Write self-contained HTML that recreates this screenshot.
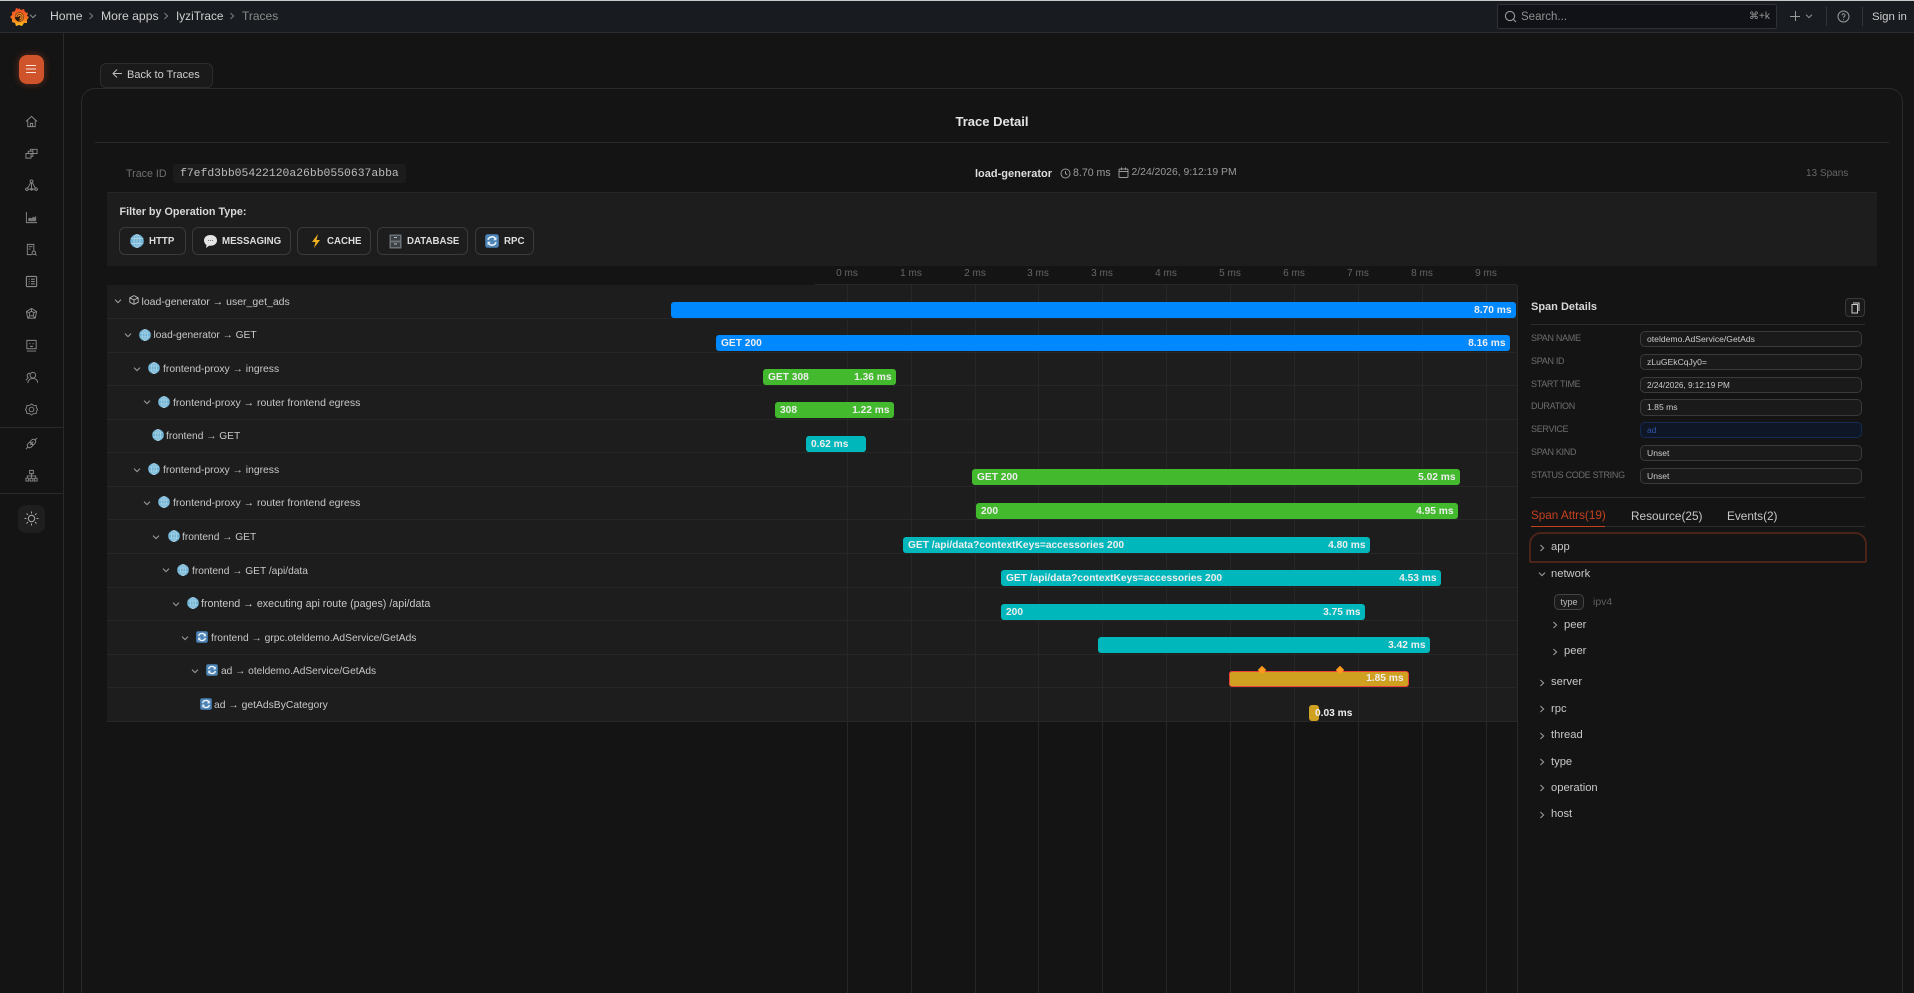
<!DOCTYPE html>
<html><head><meta charset="utf-8"><title>Trace Detail</title>
<style>
html,body{margin:0;padding:0;background:#141414;width:1914px;height:993px;overflow:hidden}
body{position:relative;font-family:"Liberation Sans",sans-serif;color:#ccc}
.a{position:absolute}
.t{position:absolute;white-space:nowrap;line-height:14px;height:14px;margin-top:-7px;font-size:11px;color:#c8c8c8}
.r{position:absolute;left:107px;width:1410px;background:#1d1d1d;border-bottom:1px solid #272727;box-sizing:border-box}
.g{position:absolute;top:285px;bottom:0;width:1px;background:#272727}
.b{position:absolute;height:16px;border-radius:3px;color:#eee;font-size:10.2px;font-weight:700;line-height:18px;box-sizing:border-box;padding:0 4.5px 0 5px;display:flex;justify-content:space-between;white-space:nowrap}
.bl{background:#0088ff}.gr{background:#43b92d}.te{background:#00b8bb}
.x{position:absolute;white-space:nowrap;font-size:10px;color:#666;line-height:12px;margin-top:-6px;width:40px;margin-left:-20px;text-align:center}
.fb{position:absolute;top:227px;height:28px;box-sizing:border-box;border:1px solid #3a3a3a;border-radius:6px;font-size:9.7px;font-weight:700;color:#ddd;line-height:27px}
.fb span{position:absolute;white-space:nowrap}
.fb svg{position:absolute;top:6px}
.l{position:absolute;left:1531px;font-size:9px;letter-spacing:-.3px;color:#6e6e6e;line-height:12px;margin-top:-6px;white-space:nowrap}
.i{position:absolute;left:1640px;width:222px;height:16px;box-sizing:border-box;border:1px solid #3a3a3a;border-radius:5px;background:#1a1a1a;font-size:8.6px;line-height:15px;padding-left:6px;color:#ccc;white-space:nowrap}
.ic{position:absolute;left:25px;width:13px;height:13px;stroke:#8a8a8a;fill:none;stroke-width:1}
.ch{position:absolute;width:8px;height:8px;stroke:#9a9a9a;fill:none;stroke-width:1.1}
.tr{font-size:11.2px}
</style></head><body>
<svg width="0" height="0" style="position:absolute">
<defs>
<linearGradient id="fl" x1="0" y1="0" x2="0" y2="1"><stop offset="0" stop-color="#ea4a24"/><stop offset=".6" stop-color="#f5761f"/><stop offset="1" stop-color="#fbc21f"/></linearGradient>
<symbol id="globe" viewBox="0 0 12 12"><circle cx="6" cy="6" r="5.8" fill="#6fb4d8"/><g stroke="#c5dfe8" stroke-width=".55" fill="none"><ellipse cx="6" cy="6" rx="2.6" ry="5.6"/><path d="M6 .4V11.6M.6 4H11.4M.6 8H11.4"/></g></symbol>
<symbol id="rpc" viewBox="0 0 12 12"><rect x=".2" y=".2" width="11.6" height="11.6" rx="2" fill="#4c84b8"/><g stroke="#eaf2f8" stroke-width="1.4" fill="none"><path d="M2.6 5A3.5 3.5 0 0 1 9 4.2"/><path d="M9.4 7A3.5 3.5 0 0 1 3 7.8"/></g><path d="M9.8 2.4V5.4H7Z M2.2 9.6V6.6H5Z" fill="#eaf2f8"/></symbol>
<symbol id="dn" viewBox="0 0 8 8"><path d="M1 2.6 4 5.6 7 2.6"/></symbol>
<symbol id="rt" viewBox="0 0 8 8"><path d="M2.4 1 5.6 4 2.4 7"/></symbol>
</defs></svg>

<!-- top bar -->
<div class="a" style="left:0;top:0;width:1914px;height:1px;background:#c9c9c9"></div>
<div class="a" style="left:0;top:1px;width:1914px;height:31px;background:#181b1f;border-bottom:1px solid #2a2d31"></div>
<svg class="a" style="left:9px;top:7px" width="20" height="20" viewBox="0 0 20 20"><path d="M10 1l2 2 3-1 1 3 3 1-1 3 2 1-2 3 0 3-3 0-2 3-3-1-3 1-1-3-3-1 0-3-2-2 2-2 0-3 3-1 1-3 3 1z" fill="url(#fl)"/><circle cx="10.500" cy="10" r="4.600" fill="#2a1a14"/><path d="M7 10a3.500 3.500 0 1 1 3.500 3.500M9 10a1.600 1.600 0 1 1 1.600 1.600" fill="none" stroke="#f58a20" stroke-width="1.300"/></svg>
<svg class="ch" style="left:29px;top:12px;stroke:#8a8a8a"><use href="#dn"/></svg>
<div class="t" style="left:50px;top:16px;font-size:12.2px;color:#cfcfcf">Home</div>
<svg class="ch" style="left:87px;top:12px;stroke:#7a7a7a"><use href="#rt"/></svg>
<div class="t" style="left:101px;top:16px;font-size:12.2px;color:#cfcfcf">More apps</div>
<svg class="ch" style="left:162px;top:12px;stroke:#7a7a7a"><use href="#rt"/></svg>
<div class="t" style="left:176px;top:16px;font-size:11.8px;color:#cfcfcf">IyziTrace</div>
<svg class="ch" style="left:228px;top:12px;stroke:#7a7a7a"><use href="#rt"/></svg>
<div class="t" style="left:242px;top:16px;font-size:12px;color:#8a8a8a">Traces</div>

<div class="a" style="left:1497px;top:4px;width:280px;height:25px;box-sizing:border-box;background:#111217;border:1px solid #2e3036;border-radius:2px"></div>
<svg class="a" style="left:1504px;top:10px" width="13" height="13" fill="none" stroke="#9a9a9a" stroke-width="1.1"><circle cx="6" cy="6" r="4.600"/><path d="M9.400 9.400 12 12"/></svg>
<div class="t" style="left:1521px;top:17px;font-size:11.5px;color:#8f8f8f">Search...</div>
<div class="t" style="left:1749px;top:17px;font-size:10px;color:#9a9a9a">⌘+k</div>
<div class="a" style="left:1790px;top:15.5px;width:10px;height:1px;background:#9a9a9a"></div>
<div class="a" style="left:1795px;top:11px;width:1px;height:10px;background:#9a9a9a"></div>
<svg class="ch" style="left:1805px;top:12px;stroke:#8a8a8a"><use href="#dn"/></svg>
<div class="a" style="left:1826px;top:7px;width:1px;height:19px;background:#33363a"></div>
<svg class="a" style="left:1837px;top:10px" width="13" height="13" fill="none" stroke="#9a9a9a" stroke-width="1"><circle cx="6.500" cy="6.500" r="5.500"/><path d="M5 5.200a1.500 1.500 0 1 1 2.300 1.300c-.6.3-.8.6-.8 1.200M6.500 9.200v.8"/></svg>
<div class="a" style="left:1862px;top:7px;width:1px;height:19px;background:#33363a"></div>
<div class="t" style="left:1872px;top:17px;font-size:11.4px;color:#cfcfcf">Sign in</div>

<!-- sidebar -->
<div class="a" style="left:63px;top:33px;width:1px;height:960px;background:#2a2a2a"></div>
<div class="a" style="left:0;top:427px;width:63px;height:1px;background:#2a2a2a"></div>
<div class="a" style="left:0;top:493px;width:63px;height:1px;background:#2a2a2a"></div>
<div class="a" style="left:19px;top:55px;width:25px;height:29px;border-radius:8px;background:#cf532b;box-shadow:0 0 8px rgba(207,83,43,.45)"></div>
<svg class="a" style="left:26px;top:64px" width="11" height="10" stroke="#fbe6dc" stroke-width="1"><path d="M0 1.500H10M0 5H10M0 8.500H10"/></svg>
<svg class="ic" style="top:115px" viewBox="0 0 14 14"><path d="M1 7 7 1.500 13 7M3 6v6.500h8V6M5.800 12.500V9h2.400v3.500"/></svg>
<svg class="ic" style="top:147px" viewBox="0 0 14 14"><path d="M1 7h5.500v5H1zM3.500 7V4.500h5M6 4.500V2.500h7v4.500H8M8.500 2.500v4.500M6.500 7h2v3H6.500"/></svg>
<svg class="ic" style="top:179px" viewBox="0 0 14 14"><circle cx="7" cy="2.500" r="1.500"/><circle cx="2" cy="11" r="1.300"/><circle cx="12" cy="11" r="1.300"/><circle cx="7" cy="11" r="1"/><path d="M6 4 2.800 10M8 4l3.200 6M3.300 11H11M7 4v6"/></svg>
<svg class="ic" style="top:211px" viewBox="0 0 14 14"><path d="M1.500 1v11.500H13"/><path d="M3.500 11V8l2-1 1.500 1 2-2 1.500 1 1.500-2v6z" fill="#777" stroke="none"/></svg>
<svg class="ic" style="top:243px" viewBox="0 0 14 14"><path d="M9.500 8V1.500h-7v11h5M4 4h4M4 6.500h2"/><circle cx="9.500" cy="10.500" r="1.900"/><path d="M11 12l1.500 1.300"/></svg>
<svg class="ic" style="top:275px;stroke-width:1.200" viewBox="0 0 14 14"><rect x="1.500" y="1.500" width="11" height="11" rx="1"/><path d="M4 4.500h1M6.500 4.500h4M4 7h1M6.500 7h4M4 9.500h1M6.500 9.500h4"/></svg>
<svg class="ic" style="top:307px" viewBox="0 0 14 14"><path d="M7 1.500 12.500 5 11 12H3L1.500 5zM7 4.500 9.500 6 8.800 9.500H5.200L4.500 6zM7 1.500v3M1.500 5l3 1M12.500 5l-3 1M3 12l2.200-2.500M11 12 8.800 9.500"/></svg>
<svg class="ic" style="top:339px" viewBox="0 0 14 14"><path d="M2 1.500h10v9H2zM2 13h10"/><path d="M4.800 5h1M8.200 5h1M5.500 8h3" stroke-width="1.300"/></svg>
<svg class="ic" style="top:371px" viewBox="0 0 14 14"><circle cx="8.500" cy="4.500" r="3"/><path d="M3 13c.5-3 2.500-5 5.500-5s5 2 5.500 5M5.500 2.500A2.500 2.500 0 0 0 3.500 7L1 10"/></svg>
<svg class="ic" style="top:403px" viewBox="0 0 14 14"><path d="M7 1 9 2.500 12 2.800 12.500 5.500 13.500 7 12.500 8.800 12 11.200 9 11.500 7 13 5 11.500 2 11.200 1.500 8.800 .5 7 1.500 5.500 2 2.800 5 2.500z"/><circle cx="7" cy="7" r="2.500"/></svg>
<svg class="ic" style="top:437px" viewBox="0 0 14 14"><path d="M1 13 3.500 10.500M13 1 10.500 3.500M5 5.500 8.500 9l-2 2a2.500 2.500 0 0 1-3.500-3.500zM9 5 5.500 8.500 M5.500 5 7.500 3a2.500 2.500 0 0 1 3.500 3.500L9 8.500z"/></svg>
<svg class="ic" style="top:469px" viewBox="0 0 14 14"><path d="M5 1.500h4v3.500H5zM1 10h3v3H1zM5.500 10h3v3h-3zM10 10h3v3h-3zM7 5v5M2.500 10V7.500h9V10"/></svg>
<div class="a" style="left:18px;top:505px;width:27px;height:28px;border-radius:8px;background:#1f1f1f"></div>
<svg class="a" style="left:24px;top:511px" width="15" height="15" viewBox="0 0 15 15" fill="none" stroke="#aaa" stroke-width="1"><circle cx="7.500" cy="7.500" r="3.200"/><path d="M7.500.5v2M7.500 12.500v2M.5 7.500h2M12.500 7.500h2M2.500 2.500l1.400 1.400M11.100 11.100l1.400 1.400M2.500 12.500l1.400-1.400M11.100 3.900l1.400-1.400"/></svg>

<!-- back + card -->
<div class="a" style="left:81px;top:88px;width:1822px;height:920px;box-sizing:border-box;border:1px solid #2a2a2a;border-radius:14px"></div>
<div class="a" style="left:100px;top:63px;width:113px;height:25px;box-sizing:border-box;background:#1a1a1a;border:1px solid #2c2c2c;border-radius:6px"></div>
<svg class="a" style="left:112px;top:68px" width="11" height="11" fill="none" stroke="#bdbdbd" stroke-width="1"><path d="M10 5.500H1M5 1.500 1 5.500 5 9.500"/></svg>
<div class="t" style="left:127px;top:75px;font-size:11px;color:#cfcfcf">Back to Traces</div>
<div class="t" style="left:892px;top:122px;width:200px;text-align:center;font-size:13px;font-weight:700;color:#e4e4e4">Trace Detail</div>
<div class="a" style="left:95px;top:142px;width:1794px;height:1px;background:#2a2a2a"></div>

<div class="t" style="left:126px;top:174px;color:#707070;font-size:10.7px">Trace ID</div>
<div class="a" style="left:173px;top:164px;width:233px;height:19px;border-radius:3px;background:#1c1c1c"></div>
<div class="t" style="left:180px;top:174px;font-family:'Liberation Mono',monospace;font-size:11.4px;color:#bdbdbd">f7efd3bb05422120a26bb0550637abba</div>
<div class="t" style="left:975px;top:174px;font-weight:700;font-size:11px;color:#dedede">load-generator</div>
<svg class="a" style="left:1060px;top:168px" width="11" height="11" fill="none" stroke="#999" stroke-width="1"><circle cx="5.500" cy="5.500" r="4.500"/><path d="M5.500 3v2.700l1.800 1"/></svg>
<div class="t" style="left:1073px;top:173px;color:#9a9a9a;font-size:10.6px">8.70 ms</div>
<svg class="a" style="left:1118px;top:167px" width="11" height="11" fill="none" stroke="#999" stroke-width="1"><rect x="1" y="2" width="9" height="8.500" rx="1"/><path d="M1 4.500h9M3.500.5v2.500M7.500.5v2.500"/></svg>
<div class="t" style="left:1131.500px;top:173px;color:#9a9a9a;font-size:10.4px">2/24/2026, 9:12:19 PM</div>
<div class="t" style="left:1806px;top:174px;color:#666;font-size:10px">13 Spans</div>

<!-- filter -->
<div class="a" style="left:107px;top:192px;width:1770px;height:74px;box-sizing:border-box;background:#1d1d1d;border-top:1px solid #272727"></div>
<div class="t" style="left:119.500px;top:212px;font-weight:700;font-size:10.8px;color:#d8d8d8">Filter by Operation Type:</div>
<div class="fb" style="left:119px;width:67px"><svg style="left:10px;width:14px;height:14px"><use href="#globe" width="14" height="14"/></svg><span style="left:29px">HTTP</span></div>
<div class="fb" style="left:192px;width:99px"><svg style="left:10px;width:15px;height:15px" viewBox="0 0 15 15"><path d="M7.500 1c3.800 0 6.500 2.300 6.500 5.400s-2.700 5.400-6.500 5.400H6L3 14l.5-3C1.900 10 1 8.300 1 6.400 1 3.300 3.700 1 7.500 1z" fill="#e4e4e4"/><path d="M5 6.500h1M7 6.500h1M9 6.500h1" stroke="#777"/></svg><span style="left:29px">MESSAGING</span></div>
<div class="fb" style="left:297px;width:74px"><svg style="left:11px;width:14px;height:14px" viewBox="0 0 14 14"><path d="M9 0 3 8h3.500L5 14l6-8H7.500z" fill="#f0b020"/></svg><span style="left:29px">CACHE</span></div>
<div class="fb" style="left:377px;width:91px"><svg style="left:11px;width:13px;height:15px" viewBox="0 0 13 15"><rect x=".5" y=".5" width="12" height="14" fill="#6b7378"/><rect x="2" y="2" width="9" height="4.500" fill="#3b4044"/><rect x="2" y="8.500" width="9" height="4.500" fill="#3b4044"/><path d="M5 3.500h3M5 10h3" stroke="#bbb"/></svg><span style="left:29px">DATABASE</span></div>
<div class="fb" style="left:475px;width:59px"><svg style="left:9px;width:14px;height:14px"><use href="#rpc" width="14" height="14"/></svg><span style="left:28px">RPC</span></div>

<!-- rows -->
<div class="r" style="top:285px;height:34px"></div><div class="r" style="top:319px;height:34px"></div><div class="r" style="top:353px;height:33px"></div><div class="r" style="top:386px;height:34px"></div><div class="r" style="top:420px;height:33px"></div><div class="r" style="top:453px;height:34px"></div><div class="r" style="top:487px;height:33px"></div><div class="r" style="top:520px;height:34px"></div><div class="r" style="top:554px;height:34px"></div><div class="r" style="top:588px;height:33px"></div><div class="r" style="top:621px;height:34px"></div><div class="r" style="top:655px;height:33px"></div><div class="r" style="top:688px;height:34px"></div>
<!-- axis -->
<div class="a" style="left:815px;top:266px;width:702px;height:19px;background:#141414;border-bottom:1px solid #272727;box-sizing:border-box"></div>
<div class="g" style="left:847px"></div><div class="g" style="left:911px"></div><div class="g" style="left:975px"></div><div class="g" style="left:1038px"></div><div class="g" style="left:1102px"></div><div class="g" style="left:1166px"></div><div class="g" style="left:1230px"></div><div class="g" style="left:1294px"></div><div class="g" style="left:1358px"></div><div class="g" style="left:1422px"></div><div class="g" style="left:1486px"></div>
<div class="a" style="left:1517px;top:285px;width:1px;bottom:0;background:#2a2a2a"></div>
<div class="x" style="left:847px;top:274px">0 ms</div><div class="x" style="left:911px;top:274px">1 ms</div><div class="x" style="left:975px;top:274px">2 ms</div><div class="x" style="left:1038px;top:274px">3 ms</div><div class="x" style="left:1102px;top:274px">3 ms</div><div class="x" style="left:1166px;top:274px">4 ms</div><div class="x" style="left:1230px;top:274px">5 ms</div><div class="x" style="left:1294px;top:274px">6 ms</div><div class="x" style="left:1358px;top:274px">7 ms</div><div class="x" style="left:1422px;top:274px">8 ms</div><div class="x" style="left:1486px;top:274px">9 ms</div>

<!-- row labels -->
<svg class="ch" style="left:114px;top:297px"><use href="#dn"/></svg>
<svg class="a" style="left:129px;top:295px" width="10" height="10" viewBox="0 0 10 10" fill="none" stroke="#bbb" stroke-width=".9"><path d="M5 .6 9.200 2.800V7.200L5 9.400 .8 7.200V2.800zM.8 2.800 5 5l4.200-2.200M5 5v4.400"/></svg>
<div class="t" style="left:141.500px;top:302px;font-size:10.5px">load-generator → user_get_ads</div>

<svg class="ch" style="left:124px;top:331px"><use href="#dn"/></svg>
<svg class="a" style="left:139px;top:329px" width="12" height="12"><use href="#globe" width="12" height="12"/></svg>
<div class="t" style="left:153.500px;top:336px;font-size:10.2px">load-generator → GET</div>

<svg class="ch" style="left:133px;top:365px"><use href="#dn"/></svg>
<svg class="a" style="left:148px;top:362px" width="12" height="12"><use href="#globe" width="12" height="12"/></svg>
<div class="t" style="left:163px;top:370px;font-size:10.35px">frontend-proxy → ingress</div>

<svg class="ch" style="left:143px;top:398px"><use href="#dn"/></svg>
<svg class="a" style="left:158px;top:396px" width="12" height="12"><use href="#globe" width="12" height="12"/></svg>
<div class="t" style="left:173px;top:403px;font-size:10.5px">frontend-proxy → router frontend egress</div>

<svg class="a" style="left:152px;top:429px" width="12" height="12"><use href="#globe" width="12" height="12"/></svg>
<div class="t" style="left:166px;top:437px;font-size:10.2px">frontend → GET</div>

<svg class="ch" style="left:133px;top:466px"><use href="#dn"/></svg>
<svg class="a" style="left:148px;top:463px" width="12" height="12"><use href="#globe" width="12" height="12"/></svg>
<div class="t" style="left:163px;top:471px;font-size:10.35px">frontend-proxy → ingress</div>

<svg class="ch" style="left:143px;top:499px"><use href="#dn"/></svg>
<svg class="a" style="left:158px;top:496px" width="12" height="12"><use href="#globe" width="12" height="12"/></svg>
<div class="t" style="left:173px;top:503px;font-size:10.5px">frontend-proxy → router frontend egress</div>

<svg class="ch" style="left:152px;top:533px"><use href="#dn"/></svg>
<svg class="a" style="left:168px;top:530px" width="12" height="12"><use href="#globe" width="12" height="12"/></svg>
<div class="t" style="left:182px;top:538px;font-size:10.2px">frontend → GET</div>

<svg class="ch" style="left:162px;top:566px"><use href="#dn"/></svg>
<svg class="a" style="left:177px;top:564px" width="12" height="12"><use href="#globe" width="12" height="12"/></svg>
<div class="t" style="left:192px;top:572px;font-size:10.2px">frontend → GET /api/data</div>

<svg class="ch" style="left:172px;top:600px"><use href="#dn"/></svg>
<svg class="a" style="left:187px;top:597px" width="12" height="12"><use href="#globe" width="12" height="12"/></svg>
<div class="t" style="left:201px;top:604px;font-size:10.7px">frontend → executing api route (pages) /api/data</div>

<svg class="ch" style="left:181px;top:634px"><use href="#dn"/></svg>
<svg class="a" style="left:196px;top:631px" width="12" height="12"><use href="#rpc" width="12" height="12"/></svg>
<div class="t" style="left:211px;top:639px;font-size:10.27px">frontend → grpc.oteldemo.AdService/GetAds</div>

<svg class="ch" style="left:191px;top:667px"><use href="#dn"/></svg>
<svg class="a" style="left:206px;top:664px" width="12" height="12"><use href="#rpc" width="12" height="12"/></svg>
<div class="t" style="left:221px;top:672px;font-size:10.2px">ad → oteldemo.AdService/GetAds</div>

<svg class="a" style="left:200px;top:698px" width="12" height="12"><use href="#rpc" width="12" height="12"/></svg>
<div class="t" style="left:214px;top:706px;font-size:10.35px">ad → getAdsByCategory</div>

<!-- bars -->
<div class="b bl" style="left:671px;top:302px;width:845px;justify-content:flex-end">8.70 ms</div>
<div class="b bl" style="left:716px;top:335px;width:794px"><span>GET 200</span><span>8.16 ms</span></div>
<div class="b gr" style="left:763px;top:369px;width:133px"><span>GET 308</span><span>1.36 ms</span></div>
<div class="b gr" style="left:775px;top:402px;width:119px"><span>308</span><span>1.22 ms</span></div>
<div class="b te" style="left:806px;top:436px;width:60px"><span>0.62 ms</span></div>
<div class="b gr" style="left:972px;top:469px;width:488px"><span>GET 200</span><span>5.02 ms</span></div>
<div class="b gr" style="left:976px;top:503px;width:482px"><span>200</span><span>4.95 ms</span></div>
<div class="b te" style="left:903px;top:537px;width:467px"><span>GET /api/data?contextKeys=accessories 200</span><span>4.80 ms</span></div>
<div class="b te" style="left:1001px;top:570px;width:440px"><span>GET /api/data?contextKeys=accessories 200</span><span>4.53 ms</span></div>
<div class="b te" style="left:1001px;top:604px;width:364px"><span>200</span><span>3.75 ms</span></div>
<div class="b te" style="left:1098px;top:637px;width:332px;justify-content:flex-end">3.42 ms</div>
<div class="b" style="left:1229px;top:671px;width:180px;background:#d0a020;border:1px solid #f0403a;line-height:14px;justify-content:flex-end">1.85 ms</div>
<div class="a" style="left:1259px;top:667px;width:6px;height:6px;background:#ff9a1f;transform:rotate(45deg)"></div>
<div class="a" style="left:1337px;top:667px;width:6px;height:6px;background:#ff9a1f;transform:rotate(45deg)"></div>
<div class="a" style="left:1309px;top:705px;width:10px;height:16px;background:#d0a020;border-radius:3px"></div>
<div class="t" style="left:1315px;top:714px;font-weight:700;font-size:10.2px;color:#eee">0.03 ms</div>

<!-- details panel -->
<div class="t" style="left:1531px;top:307px;font-weight:700;font-size:11px;color:#d8d8d8">Span Details</div>
<div class="a" style="left:1845px;top:298px;width:20px;height:19px;box-sizing:border-box;border:1px solid #3a3a3a;border-radius:4px;background:#1a1a1a"></div>
<svg class="a" style="left:1850px;top:302px" width="10" height="12" fill="none" stroke="#ccc" stroke-width="1"><path d="M2 2.500h5.500v8.500H2zM3 1h6v8"/></svg>
<div class="a" style="left:1531px;top:324px;width:334px;height:1px;background:#2d2d2d"></div>
<div class="l" style="top:338px">SPAN NAME</div><div class="i" style="top:331px">oteldemo.AdService/GetAds</div>
<div class="l" style="top:361px">SPAN ID</div><div class="i" style="top:354px">zLuGEkCqJy0=</div>
<div class="l" style="top:384px">START TIME</div><div class="i" style="top:377px;font-size:8.2px">2/24/2026, 9:12:19 PM</div>
<div class="l" style="top:406px">DURATION</div><div class="i" style="top:399px;height:17px">1.85 ms</div>
<div class="l" style="top:429px">SERVICE</div><div class="i" style="top:422px;background:#0f1626;border-color:#152a55;color:#2f55a8">ad</div>
<div class="l" style="top:452px">SPAN KIND</div><div class="i" style="top:445px">Unset</div>
<div class="l" style="top:475px">STATUS CODE STRING</div><div class="i" style="top:468px">Unset</div>
<div class="a" style="left:1531px;top:497px;width:334px;height:1px;background:#2d2d2d"></div>
<div class="t" style="left:1531px;top:516px;font-size:11.7px;color:#c5401f">Span Attrs(19)</div>
<div class="t" style="left:1631px;top:516px;font-size:11.8px;color:#c8c8c8">Resource(25)</div>
<div class="t" style="left:1727px;top:516px;font-size:11.8px;color:#c8c8c8">Events(2)</div>
<div class="a" style="left:1531px;top:526px;width:334px;height:1px;background:#2d2d2d"></div>
<div class="a" style="left:1531px;top:526px;width:74px;height:1px;background:#c5401f"></div>
<div class="a" style="left:1529px;top:532px;width:338px;height:31px;box-sizing:border-box;border:2px solid #4a2418;border-radius:12px 12px 2px 2px"></div>

<svg class="ch" style="left:1538px;top:544px"><use href="#rt"/></svg><div class="t tr" style="left:1551px;top:547px">app</div>
<svg class="ch" style="left:1538px;top:570px"><use href="#dn"/></svg><div class="t tr" style="left:1551px;top:574px">network</div>
<div class="a" style="left:1554px;top:594px;width:30px;height:16px;box-sizing:border-box;border:1px solid #444;border-radius:5px;background:#1b1b1b;font-size:9px;line-height:14px;text-align:center;color:#bbb">type</div>
<div class="t" style="left:1593px;top:602px;color:#5f5f5f;font-size:10.500px">ipv4</div>
<svg class="ch" style="left:1551px;top:621px"><use href="#rt"/></svg><div class="t tr" style="left:1564px;top:625px">peer</div>
<svg class="ch" style="left:1551px;top:648px"><use href="#rt"/></svg><div class="t tr" style="left:1564px;top:651px">peer</div>
<svg class="ch" style="left:1538px;top:679px"><use href="#rt"/></svg><div class="t tr" style="left:1551px;top:682px">server</div>
<svg class="ch" style="left:1538px;top:705px"><use href="#rt"/></svg><div class="t tr" style="left:1551px;top:709px">rpc</div>
<svg class="ch" style="left:1538px;top:732px"><use href="#rt"/></svg><div class="t tr" style="left:1551px;top:735px">thread</div>
<svg class="ch" style="left:1538px;top:758px"><use href="#rt"/></svg><div class="t tr" style="left:1551px;top:762px">type</div>
<svg class="ch" style="left:1538px;top:784px"><use href="#rt"/></svg><div class="t tr" style="left:1551px;top:788px">operation</div>
<svg class="ch" style="left:1538px;top:811px"><use href="#rt"/></svg><div class="t tr" style="left:1551px;top:814px">host</div>
</body></html>
